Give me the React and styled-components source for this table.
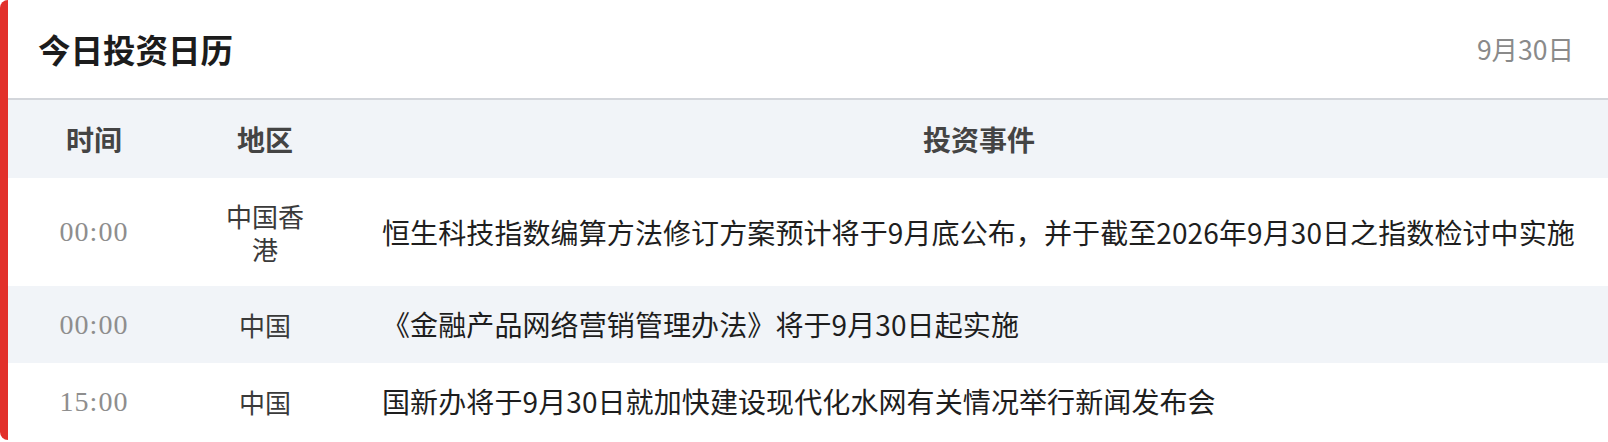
import styled, { createGlobalStyle } from "styled-components"

const Global = createGlobalStyle`
body{
  margin:0;
  background:#fff;
  font-family:"Noto Sans CJK SC","Noto Sans",sans-serif;
}
`
const Card = styled.section`
background:#fff;
border-left:8px solid #e2302a;
border-radius:8px;
overflow:hidden;
width:1608px;
box-sizing:border-box;
`
const Head = styled.div`
height:98px;
display:flex;
align-items:center;
justify-content:space-between;
padding:0 34px 0 30px;
border-bottom:2px solid #d3d6db;
`
const Title = styled.h2`
margin:0;
font-size:32.5px;
font-weight:700;
color:#1c1c1c;
line-height:1;
`
const DateText = styled.div`
font-size:26.5px;
color:#8a8a8a;
line-height:1;
`
const Row = styled.div`
display:grid;
grid-template-columns:172px 170px 1fr;
align-items:center;
min-height:${p => p.head ? 78 : 77}px;
background:${p => p.shade ? '#f1f4f8' : '#fff'};
`
const HeadCell = styled.div`
text-align:center;
font-size:28px;
font-weight:700;
color:#444;
`
const Time = styled.div`
text-align:center;
font-family:"Liberation Serif",serif;
font-size:28px;
letter-spacing:1px;
color:#8e8e8e;
`
const Area = styled.div`
text-align:center;
font-size:26px;
line-height:33px;
color:#3a3a3a;
padding:21px 40px;
`
const Event = styled.div`
font-size:28px;
line-height:35px;
letter-spacing:0.1px;
color:#1e1e1e;
padding:21px 20px 21px 32px;
`

const rows = [
  { time: '00:00', area: '中国香港', text: '恒生科技指数编算方法修订方案预计将于9月底公布，并于截至2026年9月30日之指数检讨中实施' },
  { time: '00:00', area: '中国', text: '《金融产品网络营销管理办法》将于9月30日起实施' },
  { time: '15:00', area: '中国', text: '国新办将于9月30日就加快建设现代化水网有关情况举行新闻发布会' },
]

export default function App() {
  return (
    <>
      <Global />
      <Card>
        <Head>
          <Title>今日投资日历</Title>
          <DateText>9月30日</DateText>
        </Head>
        <Row head shade>
          <HeadCell>时间</HeadCell>
          <HeadCell>地区</HeadCell>
          <HeadCell>投资事件</HeadCell>
        </Row>
        {rows.map((r, i) => (
          <Row key={i} shade={i % 2 === 1}>
            <Time>{r.time}</Time>
            <Area>{r.area}</Area>
            <Event>{r.text}</Event>
          </Row>
        ))}
      </Card>
    </>
  )
}
